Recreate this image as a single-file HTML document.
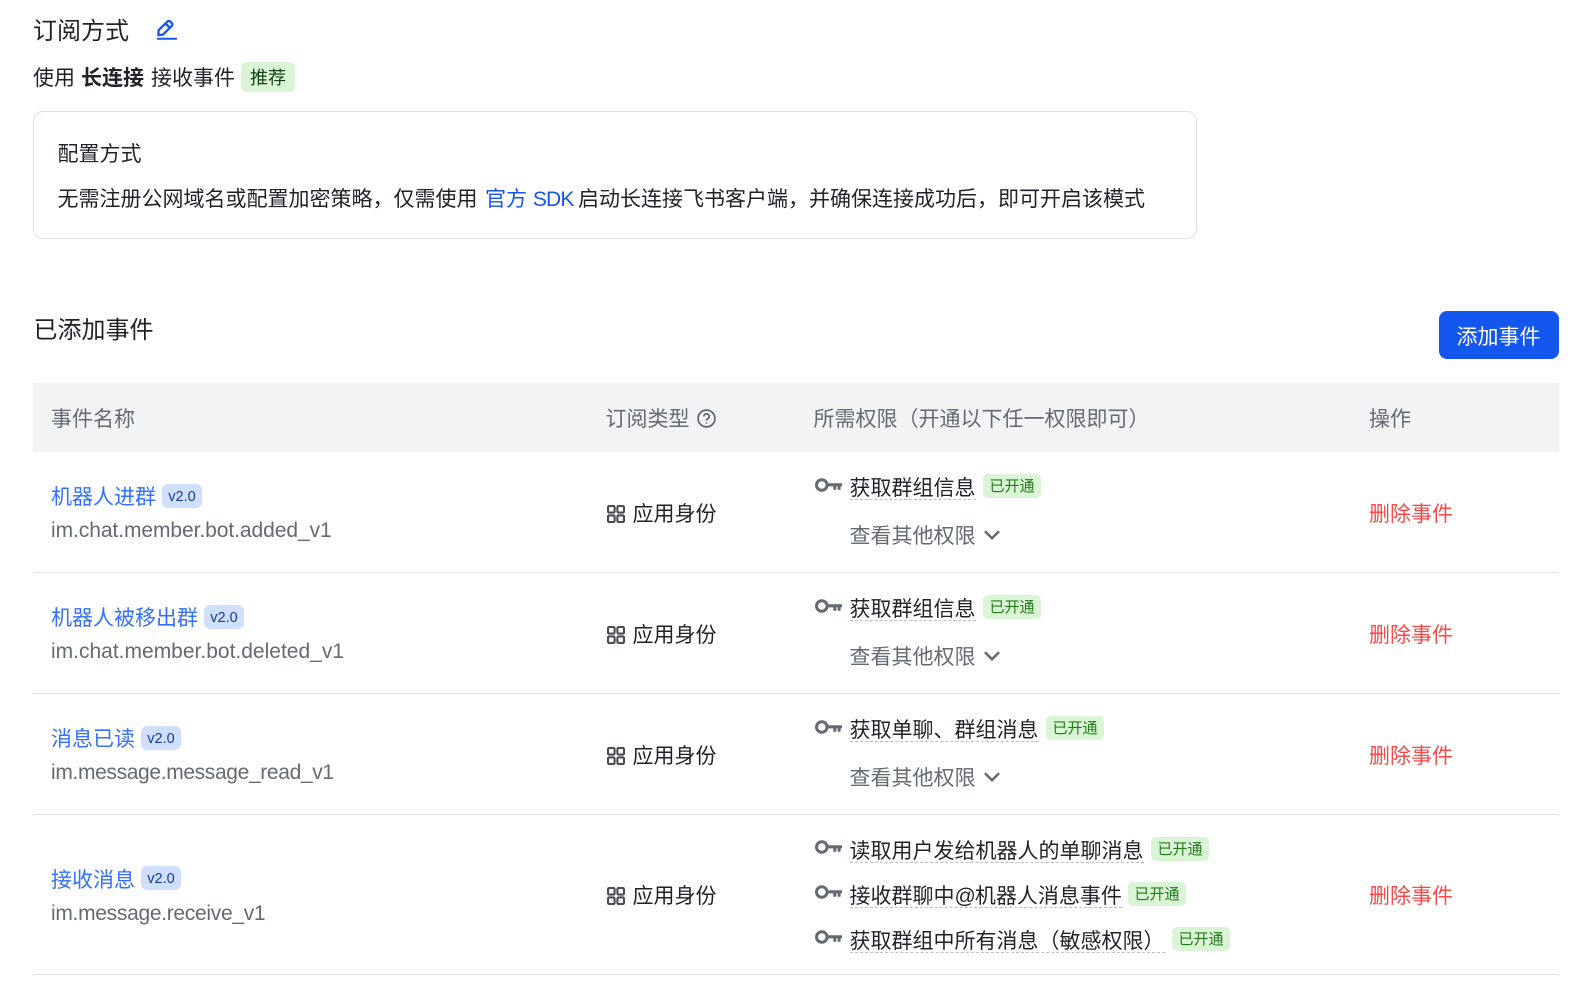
<!DOCTYPE html>
<html lang="zh-CN"><head><meta charset="utf-8"><title>事件订阅</title>
<style>
html,body{margin:0;padding:0;background:#fff}
body{position:relative;width:1569px;height:993px;overflow:hidden;font-family:"Liberation Sans","Noto Sans CJK SC",sans-serif;font-size:21px;color:#1f2329}
.t{position:absolute;white-space:nowrap;line-height:30px;height:30px;margin-top:2px}
.g{color:#646a73}.b{color:#3370ff}.r{color:#f54a45}
.perm{border-bottom:1px dashed #bbbfc4;height:25px;line-height:30px;margin-top:0}
.tag{position:absolute;height:24px;line-height:26px;border-radius:5px;background:#d9f5d6;color:#237b19;font-size:15px;text-align:center;width:58px}
.v{position:absolute;height:24px;line-height:26px;width:40px;border-radius:6px;background:#d1dffe;color:#133c9a;font-size:14.5px;text-align:center}
.line{position:absolute;left:33px;width:1526px;height:1px;background:#dee0e3}
svg{position:absolute;overflow:visible}
</style></head><body>

<div class="t" style="left:33px;top:15px;font-size:24px">订阅方式</div>
<svg style="left:156px;top:19px" width="22" height="22" viewBox="0 0 22 22" fill="none" stroke="#1456f0" stroke-width="2.3"><path d="M2.6 11.2 11.4 2.6c.9-.9 2-.9 2.8-.1l1.6 1.6c.8.8.8 1.9-.1 2.8L7 15.6l-4.6.5z" stroke-linejoin="round"/><path d="M9.6 4.6l4.4 4.4"/><path d="M1 19.8h20" stroke-width="2"/></svg>

<div class="t" style="left:33px;top:62px">使用</div>
<div class="t" style="left:81px;top:62px;font-weight:bold">长连接</div>
<div class="t" style="left:151px;top:62px">接收事件</div>
<div style="position:absolute;left:241px;top:62px;width:54px;height:30px;line-height:32px;border-radius:6px;background:#d9f5d6;color:#133f12;font-size:18px;text-align:center">推荐</div>

<div style="position:absolute;left:33px;top:111px;width:1162px;height:126px;border:1px solid #dee0e3;border-radius:10px"></div>
<div class="t" style="left:57.5px;top:138px">配置方式</div>
<div class="t" style="left:57.5px;top:183px">无需注册公网域名或配置加密策略，仅需使用</div>
<div class="t" style="left:485px;top:183px;color:#1456f0">官方 <span style="letter-spacing:-.8px">SDK</span></div>
<div class="t" style="left:578px;top:183px">启动长连接飞书客户端，并确保连接成功后，即可开启该模式</div>

<div class="t" style="left:33.5px;top:314px;font-size:24px">已添加事件</div>
<div style="position:absolute;left:1438.5px;top:311px;width:120px;height:48px;line-height:53px;border-radius:8px;background:#1456f0;color:#fff;text-align:center">添加事件</div>

<div style="position:absolute;left:33px;top:382.5px;width:1526px;height:69px;background:#f2f3f5"></div>
<div class="t g" style="left:51px;top:403px">事件名称</div>
<div class="t g" style="left:605.5px;top:403px">订阅类型</div>
<svg style="left:697px;top:409px" width="20" height="20" viewBox="0 0 20 20" fill="none" stroke="#646a73" stroke-width="1.8"><circle cx="9.5" cy="9.5" r="8.4"/><path d="M6.9 7.5a2.6 2.6 0 1 1 3.9 2.2c-.9.5-1.3 1-1.3 1.9"/><path d="M9.5 13.5v1.2"/></svg>
<div class="t g" style="left:813.5px;top:403px">所需权限（开通以下任一权限即可）</div>
<div class="t g" style="left:1369px;top:403px">操作</div>

<svg width="0" height="0" style="position:absolute"><defs>
<symbol id="key" viewBox="0 0 27 15"><circle cx="6.8" cy="7" r="5.3" fill="none" stroke="#646a73" stroke-width="3"/><path d="M12 5.2h15v3.2h-1.4v3.4h-3V8.4h-1.3v3.4h-3V8.4H12z" fill="#646a73"/></symbol>
<symbol id="grid" viewBox="0 0 18 18"><g fill="none" stroke="#484c52" stroke-width="2.1"><rect x="1" y="1" width="6.6" height="6.6" rx="1.2"/><rect x="10.4" y="1" width="6.6" height="6.6" rx="1.2"/><rect x="1" y="10.4" width="6.6" height="6.6" rx="1.2"/><rect x="10.4" y="10.4" width="6.6" height="6.6" rx="1.2"/></g></symbol>
<symbol id="chev" viewBox="0 0 16 10"><path d="M1 1.2 8 8.2l7-7" fill="none" stroke="#646a73" stroke-width="2.5"/></symbol>
</defs></svg>

<!-- row 1 -->
<div class="t b" style="left:51px;top:481px">机器人进群</div>
<div class="v" style="left:162px;top:484px">v2.0</div>
<div class="t g" style="left:51px;top:514px;letter-spacing:-.07px">im.chat.member.bot.added_v1</div>
<svg style="left:607px;top:504.5px" width="18" height="18"><use href="#grid"/></svg>
<div class="t" style="left:632.5px;top:498px">应用身份</div>
<svg style="left:815px;top:478px" width="27" height="15"><use href="#key"/></svg>
<div class="t perm" style="left:849.5px;top:474px">获取群组信息</div>
<div class="tag" style="left:983px;top:474px">已开通</div>
<div class="t g" style="left:849.5px;top:520px">查看其他权限</div>
<svg style="left:984px;top:530px" width="16" height="10"><use href="#chev"/></svg>
<div class="t r" style="left:1369px;top:498px">删除事件</div>
<div class="line" style="top:572px"></div>

<!-- row 2 -->
<div class="t b" style="left:51px;top:602px">机器人被移出群</div>
<div class="v" style="left:204px;top:605px">v2.0</div>
<div class="t g" style="left:51px;top:635px">im.chat.member.bot.deleted_v1</div>
<svg style="left:607px;top:625.5px" width="18" height="18"><use href="#grid"/></svg>
<div class="t" style="left:632.5px;top:619px">应用身份</div>
<svg style="left:815px;top:599px" width="27" height="15"><use href="#key"/></svg>
<div class="t perm" style="left:849.5px;top:595px">获取群组信息</div>
<div class="tag" style="left:983px;top:595px">已开通</div>
<div class="t g" style="left:849.5px;top:641px">查看其他权限</div>
<svg style="left:984px;top:651px" width="16" height="10"><use href="#chev"/></svg>
<div class="t r" style="left:1369px;top:619px">删除事件</div>
<div class="line" style="top:693px"></div>

<!-- row 3 -->
<div class="t b" style="left:51px;top:723px">消息已读</div>
<div class="v" style="left:141px;top:726px">v2.0</div>
<div class="t g" style="left:51px;top:756px;letter-spacing:-.35px">im.message.message_read_v1</div>
<svg style="left:607px;top:746.5px" width="18" height="18"><use href="#grid"/></svg>
<div class="t" style="left:632.5px;top:740px">应用身份</div>
<svg style="left:815px;top:720px" width="27" height="15"><use href="#key"/></svg>
<div class="t perm" style="left:849.5px;top:716px">获取单聊、群组消息</div>
<div class="tag" style="left:1046px;top:716px">已开通</div>
<div class="t g" style="left:849.5px;top:762px">查看其他权限</div>
<svg style="left:984px;top:772px" width="16" height="10"><use href="#chev"/></svg>
<div class="t r" style="left:1369px;top:740px">删除事件</div>
<div class="line" style="top:814px"></div>

<!-- row 4 -->
<div class="t b" style="left:51px;top:864px">接收消息</div>
<div class="v" style="left:141px;top:866px">v2.0</div>
<div class="t g" style="left:51px;top:897px;letter-spacing:-.3px">im.message.receive_v1</div>
<svg style="left:607px;top:886.5px" width="18" height="18"><use href="#grid"/></svg>
<div class="t" style="left:632.5px;top:880px">应用身份</div>
<svg style="left:815px;top:840px" width="27" height="15"><use href="#key"/></svg>
<div class="t perm" style="left:849.5px;top:836.5px">读取用户发给机器人的单聊消息</div>
<div class="tag" style="left:1151px;top:837px">已开通</div>
<svg style="left:815px;top:885px" width="27" height="15"><use href="#key"/></svg>
<div class="t perm" style="left:849.5px;top:881.5px">接收群聊中<span style="letter-spacing:-1px">@</span>机器人消息事件</div>
<div class="tag" style="left:1128px;top:882px">已开通</div>
<svg style="left:815px;top:930px" width="27" height="15"><use href="#key"/></svg>
<div class="t perm" style="left:849.5px;top:926.5px">获取群组中所有消息（敏感权限）</div>
<div class="tag" style="left:1172px;top:927px">已开通</div>
<div class="t r" style="left:1369px;top:880px">删除事件</div>
<div class="line" style="top:974px"></div>

</body></html>
